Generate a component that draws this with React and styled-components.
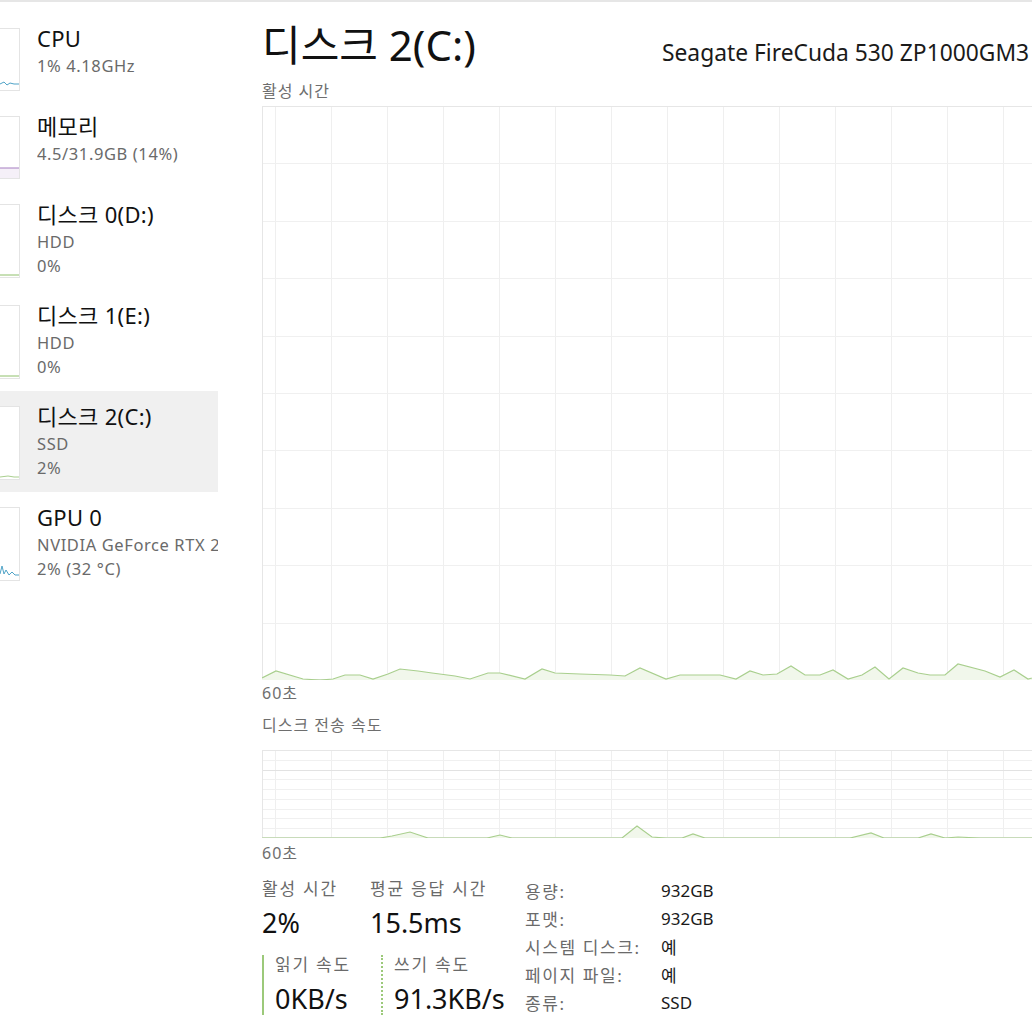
import styled, { createGlobalStyle } from "styled-components";

const GlobalStyle = createGlobalStyle`
  html, body {
    margin: 0;
    padding: 0;
    background: #fff;
  }
  body {
    font-family: "Noto Sans", "Noto Sans CJK KR", sans-serif;
  }
`;

const Window = styled.div`
  width: 1032px;
  height: 1032px;
  overflow: hidden;
  box-sizing: border-box;
  border-top: 2px solid #e6e6e6;
  display: flex;
  background: #fff;
  color: #1a1a1a;
`;

const Sidebar = styled.div`
  width: 218px;
  flex: 0 0 218px;
  padding-top: 11px;
  display: flex;
  flex-direction: column;
`;

const Item = styled.div`
  display: flex;
  align-items: flex-start;
  gap: 17px;
  box-sizing: border-box;
  padding: 11px 0 12px;
  background: ${(p) => (p.$active ? "#f0f0f0" : "transparent")};
`;

const Thumb = styled.div`
  width: 20px;
  flex: 0 0 20px;
  height: ${(p) => p.$h}px;
  margin-top: 4px;
  margin-bottom: -2px;
  box-sizing: border-box;
  background: #fff;
  border: 1px solid #e4e4e4;
  border-left: none;
  overflow: hidden;
  line-height: 0;
`;

const ItemText = styled.div`
  display: flex;
  flex-direction: column;
  white-space: nowrap;
  overflow: hidden;
`;

const ItemTitle = styled.div`
  font-size: 22px;
  line-height: 28px;
  letter-spacing: 0.3px;
  color: #111;
  margin-bottom: 2px;
`;

const ItemSub = styled.div`
  font-size: 16.5px;
  line-height: 24px;
  letter-spacing: 0.6px;
  color: #6a6a6a;
`;

const Main = styled.div`
  flex: 1;
  min-width: 0;
  padding: 19px 0 0 44px;
  display: flex;
  flex-direction: column;
  overflow: hidden;
`;

const Header = styled.div`
  display: flex;
  align-items: baseline;
  white-space: nowrap;
`;

const Title = styled.div`
  flex: 0 0 400px;
  font-size: 42px;
  line-height: 48px;
  color: #111;
`;

const Model = styled.div`
  font-size: 22.8px;
  color: #1a1a1a;
`;

const Caption = styled.div`
  font-size: 16px;
  line-height: 20px;
  letter-spacing: 1px;
  color: #6e6e6e;
  margin-top: ${(p) => p.$mt || 0}px;
  white-space: nowrap;
`;

const ChartBox = styled.div`
  width: 820px;
  margin-top: ${(p) => p.$mt || 0}px;
  height: ${(p) => p.$h}px;
  line-height: 0;
`;

const Stats = styled.div`
  display: flex;
  margin-top: 13px;
`;

const StatGroup = styled.div`
  width: 263px;
  flex: 0 0 263px;
  padding-top: 3px;
  display: flex;
  flex-direction: column;
  gap: 14px;
`;

const StatRow = styled.div`
  display: flex;
`;

const Stat = styled.div`
  width: ${(p) => p.$w}px;
  flex: 0 0 ${(p) => p.$w}px;
  box-sizing: border-box;
  display: flex;
  flex-direction: column;
  gap: 6px;
  ${(p) =>
    p.$border
      ? `border-left: 2px ${p.$border} #9cc97a; padding-left: 11px; height: 60px;`
      : ""}
`;

const StatLabel = styled.div`
  font-size: 17px;
  line-height: 20px;
  letter-spacing: 1.8px;
  color: #6a6a6a;
  white-space: nowrap;
`;

const StatValue = styled.div`
  font-size: 27px;
  line-height: 36px;
  color: #111;
  white-space: nowrap;
`;

const Props = styled.div`
  display: grid;
  grid-template-columns: 136px auto;
  grid-auto-rows: 28px;
  align-items: center;
  font-size: 17px;
`;

const PropKey = styled.div`
  color: #6a6a6a;
  letter-spacing: 1.6px;
  white-space: nowrap;
`;

const PropVal = styled.div`
  color: #1a1a1a;
  white-space: nowrap;
`;

const sideItems = [
  { title: "CPU", subs: ["1% 4.18GHz"], color: "#4fa3c7", pts: "0,55 4,53 7,56 10,54 14,55 20,55" },
  { title: "메모리", subs: ["4.5/31.9GB (14%)"], color: "#a57cc0", pts: "0,51 20,51", fill: "#f5f0f8" },
  { title: "디스크 0(D:)", subs: ["HDD", "0%"], color: "#8fc06a", pts: "0,70 20,70" },
  { title: "디스크 1(E:)", subs: ["HDD", "0%"], color: "#8fc06a", pts: "0,70 20,70" },
  { title: "디스크 2(C:)", subs: ["SSD", "2%"], color: "#a9cf8e", pts: "0,70 8,69 14,70 20,70", active: true },
  { title: "GPU 0", subs: ["NVIDIA GeForce RTX 2", "2% (32 °C)"], color: "#4fa3c7", pts: "0,66 2,58 4,66 6,62 9,67 12,64 15,67 20,67" },
];

// chart 1: 활성 시간 (page coords -> chart coords)
const chart1Raw = [
  [262, 678], [276, 671], [303, 679], [320, 680], [333, 679], [345, 675], [360, 675], [373, 679],
  [388, 674], [400, 669], [418, 671], [432, 673], [455, 676], [470, 679], [488, 673], [500, 673],
  [525, 679], [542, 669], [555, 673], [580, 674], [610, 675], [625, 676], [640, 668], [666, 679],
  [680, 675], [720, 675], [736, 679], [750, 671], [763, 675], [777, 674], [791, 666], [805, 675],
  [820, 675], [833, 670], [848, 679], [862, 675], [875, 667], [889, 679], [903, 668], [918, 673],
  [930, 675], [945, 675], [958, 664], [985, 671], [1000, 677], [1014, 670], [1028, 679], [1040, 676],
];

const chart2Raw = [
  [262, 838], [380, 838], [392, 836], [410, 832], [428, 838], [487, 838], [500, 835], [512, 838],
  [622, 838], [637, 826], [652, 837], [666, 838], [682, 838], [693, 834], [705, 838], [850, 838],
  [871, 833], [884, 838], [918, 838], [931, 834], [945, 838], [958, 837], [980, 838], [1040, 838],
];

const toPts = (raw, x0, y0) => raw.map(([x, y]) => `${x - x0},${y - y0}`).join(" ");

const Thumbnail = ({ h, color, pts, fill }) => (
  <svg width="19" height={h - 2} viewBox={`0 0 19 ${h - 2}`} preserveAspectRatio="none">
    {fill && <polygon points={`${pts} 20,${h} 0,${h}`} fill={fill} />}
    <polyline points={pts} fill="none" stroke={color} strokeWidth="1" />
  </svg>
);

const Chart = ({ w, h, rows, pts, strongRow }) => {
  const cols = [];
  for (let x = 13; x < w; x += 56) cols.push(x);
  const hs = [];
  for (let i = 1; i < rows; i++) hs.push((h / rows) * i);
  return (
    <svg width={w} height={h} viewBox={`0 0 ${w} ${h}`}>
      <rect x="0.5" y="0.5" width={w - 1} height={h - 1} fill="#fff" stroke="#e6e6e6" />
      {cols.map((x) => (
        <line key={`c${x}`} x1={x + 0.5} x2={x + 0.5} y1="1" y2={h - 1} stroke="#efefef" />
      ))}
      {hs.map((y, i) => (
        <line
          key={`r${i}`}
          x1="1"
          x2={w - 1}
          y1={Math.round(y) + 0.5}
          y2={Math.round(y) + 0.5}
          stroke={strongRow === i ? "#e2e2e2" : "#f0f0f0"}
        />
      ))}
      <polygon points={`${pts} ${w},${h} 0,${h}`} fill="#f1f7eb" />
      <polyline points={pts} fill="none" stroke="#a9cf8e" strokeWidth="1.2" />
    </svg>
  );
};

const App = () => {
  return (
    <>
      <GlobalStyle />
      <Window>
        <Sidebar>
          {sideItems.map((it) => {
            const h = it.subs.length > 1 ? 74 : 63;
            return (
              <Item key={it.title} $active={it.active}>
                <Thumb $h={h}>
                  <Thumbnail h={h} color={it.color} pts={it.pts} fill={it.fill} />
                </Thumb>
                <ItemText>
                  <ItemTitle>{it.title}</ItemTitle>
                  {it.subs.map((s) => (
                    <ItemSub key={s}>{s}</ItemSub>
                  ))}
                </ItemText>
              </Item>
            );
          })}
        </Sidebar>

        <Main>
          <Header>
            <Title>디스크 2(C:)</Title>
            <Model>Seagate FireCuda 530 ZP1000GM3</Model>
          </Header>

          <Caption $mt={12}>활성 시간</Caption>
          <ChartBox $mt={5} $h={574}>
            <Chart w={820} h={574} rows={10} pts={toPts(chart1Raw, 262, 106)} />
          </ChartBox>
          <Caption $mt={3}>60초</Caption>

          <Caption $mt={12}>디스크 전송 속도</Caption>
          <ChartBox $mt={15} $h={88}>
            <Chart w={820} h={88} rows={9} strongRow={1} pts={toPts(chart2Raw, 262, 750)} />
          </ChartBox>
          <Caption $mt={5}>60초</Caption>

          <Stats>
            <StatGroup>
              <StatRow>
                <Stat $w={108}>
                  <StatLabel>활성 시간</StatLabel>
                  <StatValue>2%</StatValue>
                </Stat>
                <Stat $w={155}>
                  <StatLabel>평균 응답 시간</StatLabel>
                  <StatValue>15.5ms</StatValue>
                </Stat>
              </StatRow>
              <StatRow>
                <Stat $w={119} $border="solid">
                  <StatLabel>읽기 속도</StatLabel>
                  <StatValue>0KB/s</StatValue>
                </Stat>
                <Stat $w={144} $border="dotted">
                  <StatLabel>쓰기 속도</StatLabel>
                  <StatValue>91.3KB/s</StatValue>
                </Stat>
              </StatRow>
            </StatGroup>

            <Props>
              <PropKey>용량:</PropKey>
              <PropVal>932GB</PropVal>
              <PropKey>포맷:</PropKey>
              <PropVal>932GB</PropVal>
              <PropKey>시스템 디스크:</PropKey>
              <PropVal>예</PropVal>
              <PropKey>페이지 파일:</PropKey>
              <PropVal>예</PropVal>
              <PropKey>종류:</PropKey>
              <PropVal>SSD</PropVal>
            </Props>
          </Stats>
        </Main>
      </Window>
    </>
  );
};

export default App;
